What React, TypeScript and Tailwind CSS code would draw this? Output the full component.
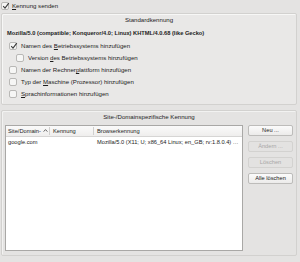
import React from "react";

const Check = ({ checked = false, disabled = false }: { checked?: boolean; disabled?: boolean }) => (
  <span
    className={`relative inline-flex h-[8px] w-[8px] shrink-0 items-center justify-center rounded-[2px] border border-[#b9b8b6] ${
      disabled ? "bg-[#e4e3e2]" : "bg-[#f6f6f5]"
    }`}
  >
    {checked && (
      <svg viewBox="0 0 8 8" className="absolute left-[0px] top-[-1px] h-[8px] w-[8px]">
        <path d="M1.2 4.2 L3 6.2 L6.8 1.2" fill="none" stroke="#3a3a3a" strokeWidth="1.1" />
      </svg>
    )}
  </span>
);

const Mn = ({ children }: { children: React.ReactNode }) => <span className="underline">{children}</span>;

const Row = ({ children, checked, indent }: { children: React.ReactNode; checked?: boolean; indent?: boolean }) => (
  <div className={`flex h-[12px] items-center gap-[4px] ${indent ? "pl-[14px]" : "pl-[7px]"}`}>
    <Check checked={checked} />
    <span>{children}</span>
  </div>
);

const Btn = ({ children, disabled }: { children: React.ReactNode; disabled?: boolean }) => (
  <div
    className={`flex h-[11px] items-center justify-center whitespace-nowrap rounded-[2px] border text-[5.7px] ${
      disabled
        ? "border-[#d3d2d0] bg-[#e3e2e1] text-[#a8a7a6]"
        : "border-[#bdbcba] bg-gradient-to-b from-[#fbfbfb] to-[#ecebea] text-[#222]"
    }`}
  >
    {children}
  </div>
);

export default function App() {
  return (
    <div className="h-[262px] w-[300px] overflow-hidden bg-[#e4e3e2] text-[6.1px] text-[#1c1c1c] [font-family:'Liberation_Sans',Arial,sans-serif]">
      <div className="flex h-[10px] items-center gap-[3px] pl-[1px] pt-[1px]">
        <Check checked />
        <span>
          <Mn>K</Mn>ennung senden
        </span>
      </div>

      <div className="ml-[1px] mr-[3px] mt-[3px] h-[92px] rounded-[2px] border border-[#d2d1cf] bg-[#e9e8e7] shadow-[inset_1px_1px_0_#f7f7f6]">
        <div className="flex h-[12px] items-center justify-center">Standardkennung</div>
        <div className="flex h-[14px] items-center pl-[5px] text-[5.7px] font-bold">
          Mozilla/5.0 (compatible; Konqueror/4.0; Linux) KHTML/4.0.68 (like Gecko)
        </div>
        <Row checked>
          Namen des <Mn>B</Mn>etriebssystems hinzufügen
        </Row>
        <Row indent>
          Version <Mn>d</Mn>es Betriebssystems hinzufügen
        </Row>
        <Row>
          Namen der Rechner<Mn>p</Mn>lattform hinzufügen
        </Row>
        <Row>
          Typ der <Mn>M</Mn>aschine (Prozessor) hinzufügen
        </Row>
        <Row>
          <Mn>S</Mn>prachinformationen hinzufügen
        </Row>
      </div>

      <div className="ml-[1px] mr-[3px] mt-[5px] h-[146px] rounded-[2px] border border-[#d2d1cf] bg-[#e4e3e2] shadow-[inset_1px_1px_0_#f2f2f1]">
        <div className="flex h-[12px] items-center justify-center">Site-/Domainspezifische Kennung</div>
        <div className="flex gap-[5px] pl-[3px] pr-[3px] pt-[2px]">
          <div className="flex h-[126px] w-[238px] flex-col border border-[#a9a8a6] bg-white text-[5.7px]">
            <div className="flex h-[11px] items-center border-b border-[#d6d5d4] bg-gradient-to-b from-[#fafafa] to-[#efeeed]">
              <div className="flex w-[44px] items-center gap-[2px] border-r border-[#d0cfce] pl-[2px]">
                <span>Site/Domain-</span>
                <svg viewBox="0 0 6 4" className="h-[3px] w-[5px]">
                  <path d="M0.5 3.5 L3 0.8 L5.5 3.5" fill="none" stroke="#333" strokeWidth="1" />
                </svg>
              </div>
              <div className="w-[44px] border-r border-[#d0cfce] pl-[3px]">Kennung</div>
              <div className="pl-[3px]">Browserkennung</div>
            </div>
            <div className="flex h-[11px] items-center">
              <div className="w-[44px] pl-[2px]">google.com</div>
              <div className="w-[44px]" />
              <div className="min-w-0 flex-1 truncate pl-[3px] pr-[2px]">
                Mozilla/5.0 (X11; U; x86_64 Linux; en_GB; rv:1.8.0.4) Gecko/20060608 Ubuntu
              </div>
            </div>
          </div>
          <div className="flex w-[46px] flex-col gap-[5px]">
            <Btn>Neu ...</Btn>
            <Btn disabled>Ändern ...</Btn>
            <Btn disabled>Löschen</Btn>
            <Btn>Alle löschen</Btn>
          </div>
        </div>
      </div>
    </div>
  );
}
